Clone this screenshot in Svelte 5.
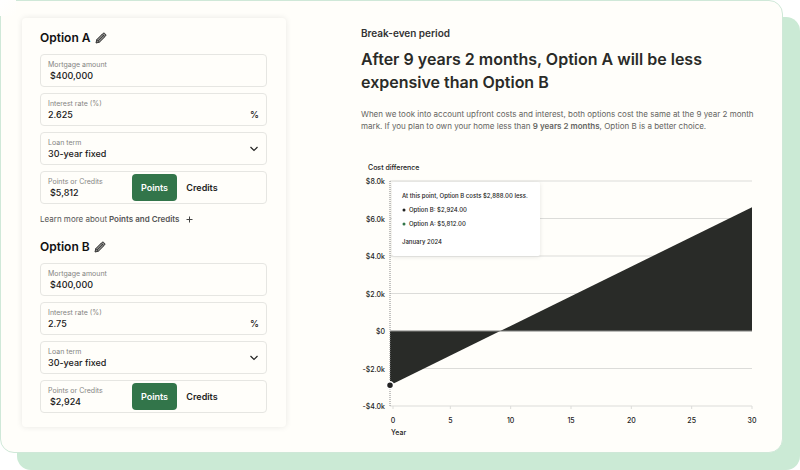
<script lang="ts">
  interface LoanOption {
    id: string;
    name: string;
    amount: string;
    rate: string;
    term: string;
    points: string;
    showHelp: boolean;
  }

  const options: LoanOption[] = $state([
    { id: 'a', name: 'Option A', amount: '$400,000', rate: '2.625', term: '30-year fixed', points: '$5,812', showHelp: true },
    { id: 'b', name: 'Option B', amount: '$400,000', rate: '2.75', term: '30-year fixed', points: '$2,924', showHelp: false }
  ]);

  // Plot area inside the chart viewBox
  const left = 29;
  const right = 391;
  const top = 21;
  const zeroY = 171;
  const bottom = 246;
  const perThousand = (zeroY - top) / 8;

  const yLabels = [
    { value: 8, text: '$8.0k' },
    { value: 6, text: '$6.0k' },
    { value: 4, text: '$4.0k' },
    { value: 2, text: '$2.0k' },
    { value: 0, text: '$0' },
    { value: -2, text: '-$2.0k' },
    { value: -4, text: '-$4.0k' }
  ];
  const years = [0, 5, 10, 15, 20, 25, 30];

  function toY(thousands: number): number {
    return zeroY - thousands * perThousand;
  }

  function tickX(year: number): number {
    return year === 0 ? left + 3 : left + (year / 30) * (right - left);
  }

  const startY = toY(-2.888);
  const endY = toY(6.6);
  const crossX = left + ((startY - zeroY) / (startY - endY)) * (right - left);
</script>

<main>
  <form class="panel">
    {#each options as option}
      <section>
        <h2>
          {option.name}
          <button type="button" class="edit" aria-label="Edit name of {option.name}">
            <svg width="12" height="12" viewBox="0 0 12 12">
              <path d="M1 11 L1.8 7.6 L7.9 1.5 Q8.9 .6 9.8 1.5 L10.5 2.2 Q11.4 3.1 10.5 4.1 L4.4 10.2 Z" fill="#8b8b88" stroke="#333" stroke-width="1" stroke-linejoin="round" />
              <path d="M3 9 L9 3 M7.2 2.4 L9.6 4.8 M1.8 7.6 L4.4 10.2" fill="none" stroke="#333" stroke-width=".8" />
            </svg>
          </button>
        </h2>

        <div class="fields">
          <div class="field">
            <label for="amount-{option.id}">Mortgage amount</label>
            <input id="amount-{option.id}" class="money" bind:value={option.amount} />
          </div>
          <div class="field">
            <label for="rate-{option.id}">Interest rate (%)</label>
            <div class="value">
              <input id="rate-{option.id}" bind:value={option.rate} />
              <span>%</span>
            </div>
          </div>
          <div class="field">
            <label for="term-{option.id}">Loan term</label>
            <select id="term-{option.id}" bind:value={option.term}>
              <option>30-year fixed</option>
            </select>
            <svg class="chevron" width="10" height="6" viewBox="0 0 10 6">
              <path d="M1.5 1 L5 4.5 L8.5 1" fill="none" stroke="#222" stroke-width="1.2" />
            </svg>
          </div>
          <div class="field with-toggle">
            <label for="points-{option.id}">Points or Credits</label>
            <input id="points-{option.id}" class="money" bind:value={option.points} />
            <div class="toggle">
              <button type="button" class="active">Points</button>
              <button type="button">Credits</button>
            </div>
          </div>
        </div>

        {#if option.showHelp}
          <button type="button" class="help">
            Learn more about <b>Points and Credits</b>
            <svg width="7" height="7" viewBox="0 0 7 7">
              <path d="M3.5 .5 V6.5 M.5 3.5 H6.5" stroke="#444" stroke-width="1" />
            </svg>
          </button>
        {/if}
      </section>
    {/each}
  </form>

  <article>
    <h3>Break-even period</h3>
    <h1>After 9 years 2 months, Option A will be less expensive than Option B</h1>
    <p>
      When we took into account upfront costs and interest, both options cost the same at the 9 year 2 month
      mark. If you plan to own your home less than <b>9 years 2 months</b>, Option B is a better choice.
    </p>

    <svg class="chart" viewBox="0 0 396 280" role="img" aria-label="Cost difference by year">
      <text x="7" y="10">Cost difference</text>

      {#each yLabels as label}
        <line x1={left} x2={right} y1={toY(label.value)} y2={toY(label.value)} class="grid" />
        <text x="24" y={toY(label.value) + 3} text-anchor="end">{label.text}</text>
      {/each}

      <polygon points="{left},{zeroY} {left},{startY} {crossX},{zeroY}" class="area" />
      <polygon points="{crossX},{zeroY} {right},{endY} {right},{zeroY}" class="area" />
      <line x1={left} x2={right} y1={zeroY} y2={zeroY} class="zero" />

      {#each years as year}
        <line x1={tickX(year)} x2={tickX(year)} y1={bottom} y2={bottom + 3} class="grid" />
        <text x={tickX(year)} y="263" text-anchor="middle">{year}</text>
      {/each}
      <text x="30" y="275">Year</text>

      <line x1={left} x2={left} y1={top} y2={bottom} class="cursor" />
      <circle cx={left} cy={startY} r="3.5" class="marker" />

      <g class="tooltip">
        <rect x="31" y="22" width="148" height="74" rx="2" />
        <text x="41" y="38">At this point, Option B costs $2,888.00 less.</text>
        <circle cx="43" cy="50" r="1.5" fill="#222" />
        <text x="48" y="52">Option B: $2,924.00</text>
        <circle cx="43" cy="64" r="1.5" fill="#32754a" />
        <text x="48" y="66">Option A: $5,812.00</text>
        <text x="41" y="84">January 2024</text>
      </g>
    </svg>
  </article>
</main>

<style>
  :global(body) {
    background: #fff;
  }

  main {
    position: relative;
    display: grid;
    grid-template-columns: 264px 1fr;
    gap: 75px;
    align-items: start;
    margin: 0 17px 17px 0;
    padding: 17px 25px 12px 21px;
    border: 1px solid #cfe8d8;
    border-radius: 14px;
    background: #fffefa;
    box-shadow: 17px 17px 0 #cbead5;
    color: #222;
    font-family: Inter, "Liberation Sans", sans-serif;
  }

  /* Fades the outline out at the top left corner */
  main::before {
    content: '';
    position: absolute;
    top: -1px;
    left: -1px;
    width: 16px;
    height: 16px;
    background: linear-gradient(135deg, #fff, #fffefa);
  }

  .panel {
    padding: 12px 19px 14px 18px;
    border-radius: 4px;
    box-shadow: 0 0 6px rgba(0, 0, 0, 0.09);
  }

  section + section {
    margin-top: 13px;
  }

  h1,
  h2,
  h3,
  p {
    margin: 0;
    font-weight: 600;
  }

  h2 {
    display: flex;
    align-items: center;
    gap: 4px;
    margin-bottom: 8px;
    color: #111;
    font-size: 12px;
    line-height: 16px;
  }

  button {
    padding: 0;
    border: 0;
    background: none;
    color: inherit;
    font-family: inherit;
  }

  .edit svg {
    display: block;
  }

  .fields {
    display: grid;
    gap: 6px;
  }

  .field {
    position: relative;
    display: flex;
    flex-direction: column;
    padding: 4px 7px;
    border: 1px solid #e6e6e2;
    border-radius: 4px;
  }

  .field label {
    color: #858583;
    font-size: 7px;
    line-height: 11px;
  }

  .field input,
  .field select,
  .value {
    width: 100%;
    height: 12px;
    padding: 0;
    border: 0;
    outline: 0;
    appearance: none;
    background: none;
    color: #181818;
    font-family: inherit;
    font-size: 9px;
    font-weight: 500;
    line-height: 12px;
  }

  .value {
    display: flex;
  }

  .field .money {
    padding-left: 2px;
  }

  .chevron {
    position: absolute;
    top: 0;
    right: 7px;
    bottom: 0;
    margin: auto 0;
    pointer-events: none;
  }

  .with-toggle {
    display: grid;
    grid-template-columns: 84px 1fr;
  }

  .toggle {
    display: flex;
    grid-area: 1 / 2 / 3 / 3;
    margin: -2px 0;
  }

  .toggle button {
    width: 45px;
    height: 27px;
    border-radius: 4px;
    font-size: 9px;
    font-weight: 600;
  }

  .toggle button + button {
    width: 50px;
  }

  .toggle .active {
    background: #32754a;
    color: #fff;
  }

  .help {
    display: flex;
    align-items: center;
    gap: 2px;
    margin-top: 8px;
    color: #555;
    font-size: 8px;
    line-height: 14px;
  }

  .help svg {
    margin-left: 4px;
  }

  b {
    font-weight: 600;
  }

  article {
    padding-top: 8px;
  }

  h3 {
    color: #333;
    font-size: 10px;
    line-height: 14px;
  }

  h1 {
    margin-top: 8px;
    color: #2a2b28;
    font-size: 16px;
    line-height: 23px;
  }

  p {
    margin-top: 14px;
    color: #646461;
    font-size: 8px;
    font-weight: 400;
    line-height: 12px;
  }

  .chart {
    display: block;
    width: 100%;
    margin-top: 28px;
  }

  .chart text {
    fill: #222;
    font-size: 7px;
    font-weight: 500;
  }

  .chart .tooltip text {
    font-size: 6px;
  }

  .grid {
    stroke: #dcdcd9;
    stroke-width: 1;
  }

  .zero {
    stroke: #8b8b88;
    stroke-width: 1;
  }

  .area {
    fill: #292b28;
  }

  .cursor {
    stroke: #888;
    stroke-width: 1;
    stroke-dasharray: 1 1;
  }

  .marker {
    fill: #222;
    stroke: #fff;
    stroke-width: 1.5;
  }

  .tooltip rect {
    fill: #fff;
    filter: drop-shadow(0 1px 2px rgba(0, 0, 0, 0.1));
  }
</style>
